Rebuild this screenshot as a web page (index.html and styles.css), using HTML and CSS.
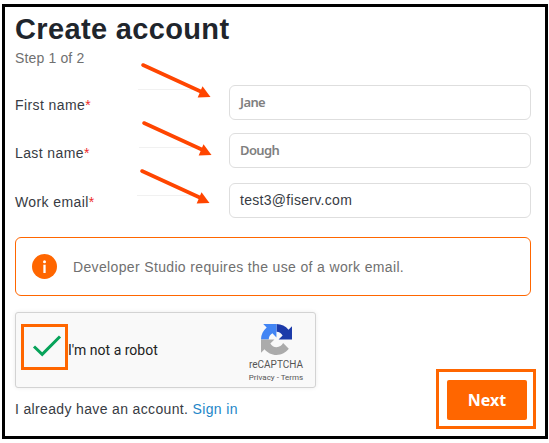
FILE: index.html
```
<!DOCTYPE html>
<html lang="en">
<head>
<meta charset="utf-8">
<title>Create account</title>
<link rel="stylesheet" href="styles.css">
</head>
<body>
<main class="frame">
  <h1 class="title">Create account</h1>
  <p class="step">Step 1 of 2</p>
  <form class="form">
    <div class="row"><label class="label">First name<span class="req">*</span></label><div class="field typed">Jane</div></div>
    <div class="row"><label class="label">Last name<span class="req">*</span></label><div class="field typed dough">Dough</div></div>
    <div class="row email"><label class="label">Work email<span class="req">*</span></label><div class="field">test3@fiserv.com</div></div>
  </form>
  <div class="alert">
    <svg class="info" viewBox="0 0 25 25"><circle cx="12.5" cy="12.5" r="12.5" fill="#ff6600"/><circle cx="12.5" cy="7.7" r="1.5" fill="#fff"/><path d="M12.5 10.7V19" stroke="#fff" stroke-width="2.3"/></svg>
    <span class="notice">Developer Studio requires the use of a work email.</span>
  </div>
  <div class="bottom">
    <div class="left">
      <div class="captcha">
        <div class="checkbox"><svg width="41" height="40" viewBox="24 327 41 40"><path d="M34 346.5L42.2 354.3L60 336.5" fill="none" stroke="#07a35a" stroke-width="3"/></svg></div>
        <span class="robot">I'm not a robot</span>
        <div class="brand">
          <svg class="logo" viewBox="0 0 64 64"><path fill="#1c3aa9" d="M64 31.96a33 33 0 0 0-.03-1.37V4.63l-7.18 7.18C50.9 4.61 41.97 0 31.98 0v16l.36.01c5 .2 9.6 3 12.3 7.6L36.3 31.96H64z"/><path fill="#4285f4" d="M31.86 0a33 33 0 0 0-1.37.03H4.53l7.18 7.18C4.5 13.1 0 22.03 0 32h16c0-5.7 2.8-9.9 7.5-12.7l8.36 8.36V0z"/><path fill="#ababab" d="M0 32a33 33 0 0 0 .03 1.37v25.96l7.18-7.18C13.1 59.35 22.03 64 32 64c10.4 0 19.6-5 25.4-12.7L45.7 39.4A16 16 0 0 1 32 48c-5.7 0-10-2.6-12.7-7.6L27.7 32z"/></svg>
          <span class="name">reCAPTCHA</span>
          <span class="terms">Privacy - Terms</span>
        </div>
      </div>
      <p class="signin">I already have an account. <a>Sign in</a></p>
    </div>
    <div class="highlight"><button class="next" type="button">Next</button></div>
  </div>
</main>
<svg class="arrows" width="549" height="443" viewBox="0 0 549 443">
  <path d="M138 89.5H195M139 147.5H200M137 195.5H196" stroke="#f1f1f1"/>
  <defs><g id="arrow"><path d="M0 0L61 28" stroke="#ff4500" stroke-width="3.6" stroke-linecap="round"/><path d="M59.5 21.3L67.5 32L54.7 32.5Z" fill="#ff4500"/></g></defs>
  <use href="#arrow" x="143" y="65"/><use href="#arrow" x="144" y="123"/><use href="#arrow" x="142" y="171"/>
</svg>
</body>
</html>
```
FILE: styles.css
```
* { box-sizing: border-box; }
body { margin: 0; padding: 4px 1px 4px 2px; background: #fff; color: #373b43; font: 14px/20px "Liberation Sans", Arial, sans-serif; }
.frame { width: 546px; height: 435px; border: 3px solid #000; padding: 0 11px 0 10px; overflow: hidden; }
.title { margin: 4px 0 0; font-size: 29px; line-height: 36px; letter-spacing: .35px; color: #20252c; white-space: nowrap; }
.step { margin: 2px 0 0; line-height: 19px; color: #707070; letter-spacing: .15px; }
.form { margin: 17px 0 0; width: 516px; display: flex; flex-direction: column; gap: 13px; }
.row { display: grid; grid-template-columns: 214px 302px; height: 35px; align-items: center; }
.email { margin-top: 2px; }
.label { letter-spacing: .4px; padding-top: 4px; }
.email .label { padding-top: 3px; }
.req { color: #ee2a2a; }
.field { height: 35px; border: 1px solid #dedede; border-radius: 6px; padding: 0 10px; line-height: 33px; letter-spacing: .3px; }
.typed { color: #7f7f7f; font-family: "Noto Sans", sans-serif; font-weight: 600; font-size: 13px; letter-spacing: -.6px; }
.alert { margin-top: 19px; width: 516px; height: 59px; border: 1px solid #ff6600; border-radius: 6px; padding-left: 16px; display: flex; align-items: center; gap: 16px; color: #707070; }
.info { width: 25px; height: 25px; }
.notice { letter-spacing: .35px; }
.bottom { display: flex; margin-top: 16px; width: 521px; justify-content: space-between; }
.captcha { width: 301px; height: 76px; border: 1px solid #d3d3d3; border-radius: 3px; background: #f9f9f9; box-shadow: 0 0 4px rgba(0,0,0,.08); display: flex; font-family: Roboto, sans-serif; }
.checkbox { width: 47px; height: 46px; border: 3px solid #ff6600; margin: 11px 0 0 5px; }
.checkbox svg { display: block; }
.robot { margin-top: 27px; color: #222; font-size: 14px; white-space: nowrap; }
.brand { margin-left: auto; width: 78px; display: flex; flex-direction: column; align-items: center; color: #555; }
.logo { width: 31px; height: 31px; margin-top: 11px; }
.name { font-size: 10px; line-height: 12px; margin-top: 4px; }
.terms { font-size: 8px; line-height: 10px; margin-top: 2px; white-space: nowrap; }
.signin { margin: 11px 0 0; letter-spacing: .35px; white-space: nowrap; }
.signin a { color: #2386c8; }
.highlight { width: 100px; height: 60px; margin-top: 57px; border: 3px solid #ff6600; padding: 8px; }
.next { display: block; width: 78px; height: 38px; width: 80px; height: 40px; border: 0; border-radius: 2px; padding: 0; background: #ff6600; color: #fff; font: 700 16px/38px "Noto Sans", sans-serif; }
.arrows { position: absolute; left: 0; top: 0; pointer-events: none; }
```
